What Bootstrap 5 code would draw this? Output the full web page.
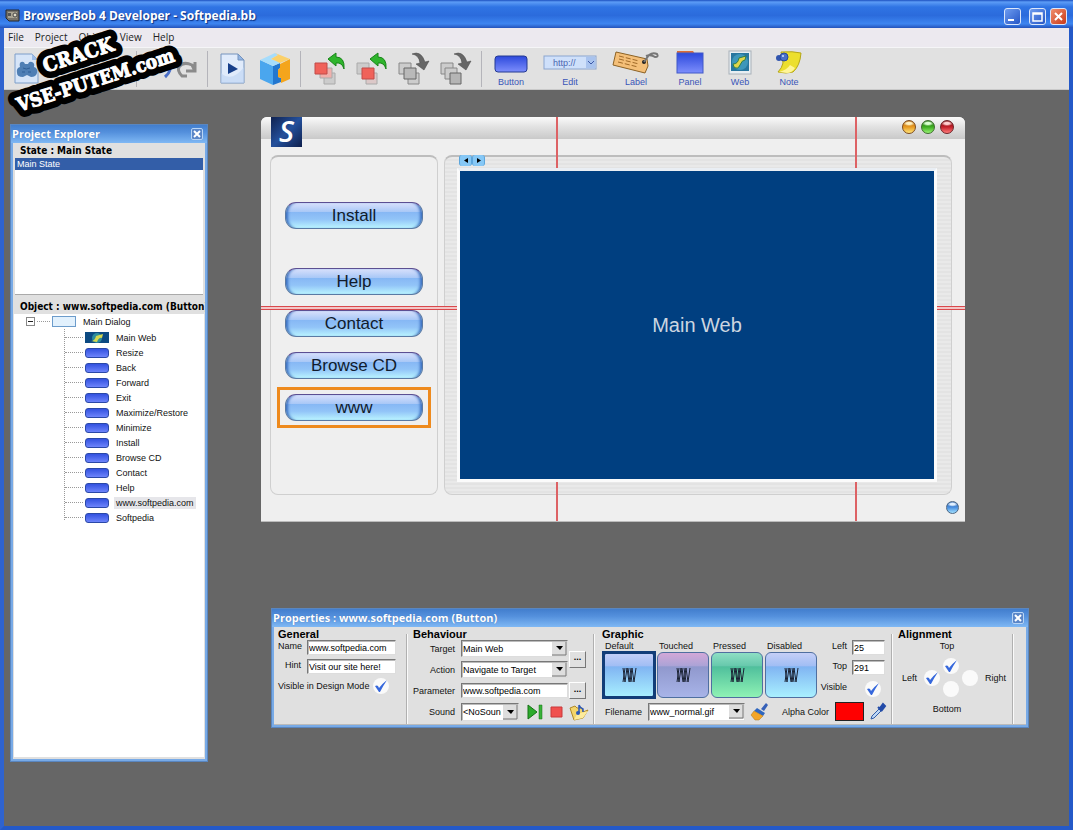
<!DOCTYPE html>
<html lang="en">
<head>
<meta charset="utf-8">
<meta name="viewport" content="width=device-width, initial-scale=1">
<title>BrowserBob 4 Developer - Softpedia.bb</title>
<link href="https://cdn.jsdelivr.net/npm/bootstrap@5.3.0/dist/css/bootstrap.min.css" rel="stylesheet">
<style>
:root{--ui:"Liberation Sans",Arial,sans-serif;--cap:"Open Sans","Noto Sans",sans-serif}
body{font-family:var(--ui);font-size:9px;line-height:12px;color:#111;background:#666}
button,input,select{font-family:inherit;font-size:inherit;line-height:inherit}
svg{display:block;overflow:visible}
.app{min-height:100vh;border:solid #2459c8;border-width:0 4px 4px;border-left-color:#2f63cf}
.titlebar{height:28px;margin:0 -4px;padding:4px 6px 0 5px;background:linear-gradient(#1c50c0 0,#5c9cf6 2px,#2f74e4 7px,#2b6bdc 55%,#3d85f0 85%,#2453bb);color:#fff}
.titlebar h1{font:bold 12px/16px var(--cap);text-shadow:1px 1px 1px #0b2f80;padding-left:2px}
.wbtn{width:17px;height:17px;padding:0;border:1px solid #dbe7fb;border-radius:3px;background:linear-gradient(135deg,#6e9cf0,#2556c6);color:#fff}
.wbtn.close-app{background:linear-gradient(135deg,#f0906e,#c8391a)}
.menubar{height:19px;background:#ece9ef;padding-left:4px}
.menubar a{font:10px/19px var(--cap);color:#222;text-decoration:none;margin-right:11px}
.toolbar{height:43px;background:#e1e1e1;border-top:1px solid #f5f5f7;border-bottom:1px solid #c9c9c9;padding-left:2px}
.tool{border:0;background:none;padding:0;flex:none;height:42px;color:#3a55b8;width:42px}
.tool svg{margin:auto}
.tool.slim{width:24px}
.w50{width:50px}.w68{width:68px}.w64{width:64px}.w44{width:44px}.w56{width:56px}.w14{width:14px}
.rule{width:1px;height:36px;background:#b4b4ba;flex:none}
.desk{background:#666}
.float{position:absolute;border:3px solid #78aae6;border-top:0;outline:1px solid #5a86bf;outline-offset:-1px;background:#e0e0e0}
.float>header{height:19px;margin:0 -3px;padding:0 5px 0 2px;background:linear-gradient(#3f7bcb,#5591dd 45%,#7fb8f4);color:#fff}
.float>header h2{font:bold 11px/19px var(--cap);text-shadow:0 0 1px #3c69ac}
.xbtn{width:12px;height:12px;padding:0;border:1px solid #b9d5f5;border-radius:2px;background:#5a86c8;color:#fff}
.explorer{left:6px;top:34px;width:198px;height:638px}
.band{height:15px;padding-left:7px;background:#e0e0e0;white-space:nowrap;overflow:hidden}
.band h3{font:bold 10px/15px "DejaVu Sans Condensed","DejaVu Sans",sans-serif;color:#000}
.states{height:137px;margin:0 2px;background:#fff;border-bottom:1px solid #aaa}
.states li{height:12px;padding-left:2px;background:#335ea8;color:#fff}
.tree{margin:0 1px 2px;background:#fff}
.tree ul{margin:0 0 0 50px;border-left:1px dotted #999;height:191px;padding-top:1px}
.root-row,.tree li{height:15px}
.root-row{padding-left:12px}
.minus{width:9px;height:9px;border:1px solid #888;padding:0;background:linear-gradient(#222,#222) center/5px 1px no-repeat #fff}
.dots{border-top:1px dotted #999;width:18px;height:1px;margin-right:2px}
.root-row .dots{width:13px;margin:0 2px}
.chip{width:24px;height:10px;border-radius:3px;border:1px solid #2a48a8;background:linear-gradient(#3352e0,#6d84fb)}
.chip.dlg{border-radius:0;background:#e2f1fd;border-color:#6c9ccb;height:11px}
.tree a{color:#111;text-decoration:none;padding:0 2px;line-height:12px;margin-left:5px}
.tree a.active{background:#e6e6ea}
.preview{position:absolute;left:257px;top:27px;width:704px;background:#efefef;border-radius:6px 6px 0 0;border-bottom:1px solid #bbb}
.preview-bar{height:22px;border-radius:6px 6px 0 0;background:linear-gradient(#fafafa,#e4e4e4 40%,#c9c9c9);padding:0 11px 2px 0;gap:5px}
.logo-s{position:absolute;left:10px;top:0;width:31px;height:30px;background:linear-gradient(135deg,#10224f,#24509c 50%,#0e1f4c);color:#fff;font:italic 600 29px/28px var(--cap);text-align:center}
.panes{padding:16px 13px 0 9px;gap:6px}
.foot{padding:6px 6px 7px}
.orb{width:14px;height:14px;border-radius:50%;border:1px solid #7d4a1c}
.orb.y{background:radial-gradient(ellipse 50% 22% at 50% 20%,#fff0c0 40%,transparent),linear-gradient(#b86a10,#e89a22 50%,#ffe478)}
.orb.g{background:radial-gradient(ellipse 50% 22% at 50% 20%,#d9ffd0 40%,transparent),linear-gradient(#236d12,#3fae22 50%,#98f474);border-color:#3c6b2c}
.orb.r{background:radial-gradient(ellipse 50% 22% at 50% 20%,#ffd0d0 40%,transparent),linear-gradient(#7a0e14,#c4202a 50%,#ff7c7c);border-color:#6d2226}
.orb.b{background:radial-gradient(ellipse 50% 22% at 50% 20%,#e2f0ff 40%,transparent),linear-gradient(#3468b0,#4b90e0 50%,#a0e0ff);border-color:#4c6684;width:13px;height:13px}
.pane{height:340px;border:1px solid #cfcfcf;border-top:2px solid #bdbdbd;border-radius:8px}
.side{width:168px;padding-top:45px;gap:15px}
.aqua{width:138px;height:27px;flex:none;padding:0;border:1px solid #5a7aa4;border-top-color:#5c4f92;border-radius:11px;font-size:17px;line-height:24px;color:#111b2c;background:linear-gradient(#d8e0fb 0,#a9c8f7 35%,#86b7f4 36%,#92c4f8 65%,#b9f4ff);box-shadow:inset 4px 0 3px -2px #3a6fc0,inset -4px 0 3px -2px #3a6fc0;position:relative}
.aqua.apart{margin-bottom:24px}
.aqua.chosen::after{content:"";position:absolute;inset:-8px -9px;border:3px solid #ee8a1d}
.stage{padding:11px 14px 12px 12px;background:repeating-linear-gradient(#e9e9e9 0 2px,#e3e3e3 2px 4px)}
.web{z-index:2;background:#003f80;border:3px solid #fbfbfb;border-top-color:#e9eef4;font-size:20px;line-height:24px;color:#ccd6e0}
.pager{position:absolute;left:198px;top:38px;z-index:3}
.pager button{width:13px;height:11px;padding:0;border:1px solid #5ba5dc;border-width:0 1px;border-radius:3px;background:#86c8f6}
.gv,.gh{position:absolute;z-index:1}
.gv{top:0;bottom:0;width:2px;background:#dd6265}
.gv.first{left:295px}.gv.last{left:594px}
.gh{left:0;right:0;top:189px;height:4px;background:linear-gradient(#d9484c 1px,#f2c6c6 1px 3px,#d9484c 3px)}
.props{left:267px;top:518px;width:758px}
.props fieldset{height:96px;border-right:1px solid #b0b0b0;box-shadow:1px 0 #fafafa;flex:none;min-width:0}
.props-body{border-bottom:1px solid #bbb;height:98px;padding-top:1px}
.props legend{float:none;margin:0;width:auto;font:bold 11px/12px var(--ui);color:#000}
.general{width:133px;padding-left:4px}
.behave{width:187px;padding-left:6px}
.graphic{width:298px;padding-left:8px}
.align{width:121px;padding-left:6px}
.field,.pick{border:1px solid #777;border-right-color:#ddd;border-bottom-color:#ddd;background:#fff;border-radius:0;color:#000;padding:0 1px;min-width:0;box-shadow:inset 1px 1px #bbb}
.field{height:15px}
.pick{appearance:none;height:17px;padding-right:17px;overflow:hidden;background:#fff url("data:image/svg+xml,%3Csvg xmlns='http://www.w3.org/2000/svg' width='15' height='15'%3E%3Cpath d='M0 0h15v15H0z' fill='%23dedede'/%3E%3Cpath d='M14 0v14H0' fill='none' stroke='%23777'/%3E%3Cpath d='M4 5h7l-3 4z'/%3E%3C/svg%3E") right center no-repeat}
.pick.tall{height:18px}
.pick.sound{width:58px}
.pick.file{width:97px}
.tick{appearance:none;width:16px;height:16px;margin:0;border:0;border-radius:50%;background:#fafafa center/16px no-repeat;flex:none}
.tick:checked{background-image:url("data:image/svg+xml,%3Csvg xmlns='http://www.w3.org/2000/svg' viewBox='0 0 16 16'%3E%3Cpath d='M2 8q2-1 3 0l1 2q4-5 8-8-4 6-7 12H6z' fill='%233567dc'/%3E%3C/svg%3E")}
.rows-general{display:grid;grid-template-columns:23px 89px;column-gap:6px;row-gap:4px;text-align:right}
.rows-behave{display:grid;grid-template-columns:42px 107px 16px;column-gap:6px;row-gap:4px;text-align:right;align-items:center}
.rows-place{display:grid;grid-template-columns:1fr 33px;gap:4px 5px;text-align:right;margin-left:auto;padding-right:6px}
.more{width:17px;height:17px;padding:0 0 4px;border:1px solid #fff;border-right-color:#777;border-bottom-color:#777;background:#e0e0e0;font-weight:bold;margin-left:-5px;line-height:10px}
.two-rows{grid-row:span 2}
.two-cols{grid-column:span 2}
.bare{border:0;background:none;padding:0;flex:none}
.thumb{display:block;position:relative;width:52px;height:46px;padding:0;border:1px solid #4f6fa0;border-radius:6px;background:linear-gradient(#c5cff7,#a0bdf4 30%,#80b4f2 31%,#a9f0ff)}
.thumb.t{background:linear-gradient(#d3a8d8,#aaa3d6 30%,#9098cd 31%,#a8b4e8)}
.thumb.p{background:linear-gradient(#8edfc4,#66c8ac 30%,#4fbf9c 31%,#8ff2b4)}
.thumb.on::after{content:"";position:absolute;inset:-2px;border:3px solid #123d78}
.states4{gap:2px;padding-left:1px}
.states4 span{display:block;padding-left:2px}
.file-row{gap:6px;padding:4px 0 0 3px;white-space:nowrap}
.swatch{width:29px;height:19px;border:1px solid #222;background:#f00;padding:0;flex:none}
.compass{gap:3px;padding:6px 0}
.compass>div{gap:7px}
.stampmark{position:absolute;left:0;top:0;z-index:9;pointer-events:none}
</style>
</head>
<body>
<div class="app d-flex flex-column position-relative">
  <div class="titlebar d-flex align-items-center">
    <svg width="16" height="16"><path d="M1 2h13v11H4L1 10z" fill="#77736a" stroke="#25282e"/><path d="M3 4h9v6H3z" fill="#a9a493"/><circle cx="10" cy="7" r="2" fill="#e1ddcb" stroke="#444"/><path d="M3 5h3v3H3z" fill="#555"/></svg>
    <h1 class="m-0 me-auto">BrowserBob 4 Developer - Softpedia.bb</h1>
    <div class="d-flex gap-1">
      <button class="wbtn" aria-label="Minimize"><svg width="15" height="15"><path d="M3 11h6" stroke="#fff" stroke-width="2"/></svg></button>
      <button class="wbtn ms-1" aria-label="Maximize"><svg width="15" height="15"><path d="M3 4h9v8H3zM3 5h9" fill="none" stroke="#fff" stroke-width="1.500"/></svg></button>
      <button class="wbtn close-app" aria-label="Close"><svg width="15" height="15"><path d="M4 4l7 7M11 4l-7 7" stroke="#fff" stroke-width="2"/></svg></button>
    </div>
  </div>
  <nav class="menubar d-flex ps-1"><a href="#">File</a><a href="#">Project</a><a href="#">Object</a><a href="#">View</a><a href="#">Help</a></nav>

  <div class="toolbar d-flex align-items-center">
    <button class="tool" aria-label="New"><svg width="26" height="32"><path d="M1 1h17l6 6v23H1z" fill="#d6e5f8" stroke="#7d9ec9"/><path d="M18 1v6h6" fill="#9dbce6"/><path d="M7 9q3-1 4 2h3q1-3 4-2 3 1 2 5 4 1 3 6-1 4-6 4l-4-2-4 2q-6 0-6-4-1-5 3-6-1-4 1-5z" fill="#4f7fb4"/><path d="M9 15q3 2 7 0M8 19h3M14 19h3" stroke="#2f5f96" fill="none"/></svg></button>
    <div class="w44 flex-shrink-0"></div><div class="w44 flex-shrink-0"></div>
    <div class="rule"></div><div class="w14 flex-shrink-0"></div>
    <button class="tool slim" aria-label="Undo"><svg width="20" height="20"><path d="M2 2v7h7M3 8Q10 2 15 6q5 5-3 12" fill="none" stroke="#4a6fc8" stroke-width="3"/></svg></button>
    <button class="tool slim" aria-label="Redo"><svg width="22" height="22"><path d="M11 18H6Q1 13 3 9q4-6 13-2l2 4M19 4v9h-9" fill="none" stroke="#8b8b8b" stroke-width="3"/></svg></button>
    <div class="ps-2"></div><div class="rule"></div><div class="ps-1"></div>
    <button class="tool" aria-label="Run"><svg width="26" height="32"><path d="M1 1h17l6 6v23H1z" fill="#e0ebfb" stroke="#7593bd"/><path d="M18 1v6h6z" fill="#92b5e4" stroke="#7593bd"/><path d="M1 30h23V14Q12 30 1 20z" fill="#bdd4f4" opacity=".6"/><path d="M8 10v11l10-5z" fill="#173f8a"/></svg></button>
    <button class="tool" aria-label="Build"><svg width="32" height="34"><path d="M1 8L14 14v19L1 27z" fill="#4aa6ee"/><path d="M14 14l7-3v5l-2 2v7l3 1v4l-8 3z" fill="#2377cf"/><path d="M1 8L16 1l3 2-7 4 5 2 5-1-1 3-7 3z" fill="#a6dcfb"/><path d="M21 12l10-5v20l-9 4v-5l-3-1v-7l2-2z" fill="#f4a51c"/><path d="M16 1l15 6-10 4-4-2-5-2 7-4z" fill="#fbd069"/></svg></button>
    <div class="ps-1"></div><div class="rule"></div><div class="ps-2"></div>
    <button class="tool" aria-label="Bring to front"><svg width="32" height="34"><g stroke="#aaa"><path d="M10 21h11v11H10z" fill="#ccc"/><path d="M6 16h12v10H6z" fill="#f0b0ac"/><path d="M1 11h12v11H1z" fill="#f0625a" stroke="#c04a48"/></g><path d="M14 7l8-6v4q9 0 8 12-2-7-8-6v3z" fill="#2fb52c" stroke="#188418"/></svg></button>
    <button class="tool" aria-label="Bring forward"><svg width="32" height="34"><g stroke="#aaa"><path d="M10 21h11v11H10z" fill="#dcc8c8"/><path d="M1 11h12v11H1z" fill="#ccc"/><path d="M6 16h12v11H6z" fill="#f0625a" stroke="#c04a48"/></g><path d="M14 7l8-6v4q9 0 8 12-2-7-8-6v3z" fill="#2fb52c" stroke="#188418"/></svg></button>
    <button class="tool" aria-label="Send backward"><svg width="32" height="34"><g stroke="#888" fill="#ccc"><path d="M1 11h12v11H1z"/><path d="M10 21h11v11H10z"/><path d="M6 16h12v11H6z" fill="#b9b9b9" stroke="#666"/></g><path d="M14 2Q23-2 27 10l4-1-5 9-8-6 4-1q-1-8-8-9z" fill="#666" stroke="#444" stroke-width=".5"/></svg></button>
    <button class="tool" aria-label="Send to back"><svg width="32" height="34"><g stroke="#888" fill="#ccc"><path d="M1 11h12v11H1z"/><path d="M5 16h12v11H5z"/><path d="M10 21h11v11H10z" fill="#b5b5b5" stroke="#666"/></g><path d="M14 2Q23-2 27 10l4-1-5 9-8-6 4-1q-1-8-8-9z" fill="#666" stroke="#444" stroke-width=".5"/></svg></button>
    <div class="ps-1"></div><div class="rule"></div><div class="ps-1"></div>
    <button class="tool w50"><svg width="34" height="26"><defs><linearGradient id="blu" x2="0" y2="1"><stop stop-color="#2c49dc"/><stop offset="1" stop-color="#7d8efc"/></linearGradient></defs><rect x="1" y="6" width="32" height="16" rx="3" fill="url(#blu)" stroke="#253a92"/></svg>Button</button>
    <button class="tool w68"><svg width="54" height="26"><rect x="1" y="6" width="52" height="13" fill="#cfe0fa" stroke="#8ca6cf"/><path d="M43 7h9v11h-9z" fill="#a9c3ee"/><path d="M45 11l3 3 3-3" fill="none" stroke="#3c59a8"/><text x="10" y="16" font-size="9" fill="#4b66b0">http://</text></svg>Edit</button>
    <button class="tool w64"><svg width="48" height="26"><path d="M4 2l31 7 1 7-3 7L1 15z" fill="#f4bf78" stroke="#8c6224"/><path d="M7 6l20 5M7 9l20 5M6 12l20 5" stroke="#a06a28" stroke-dasharray="5 2"/><circle cx="32" cy="12" r="2" fill="#222"/><path d="M32 12l5-7q4-3 8-1 2 3-2 3-4-3-9-1" fill="none" stroke="#777" stroke-width="2"/></svg>Label</button>
    <button class="tool w44"><svg width="28" height="26"><path d="M1 4V1h16l2 3z" fill="#dd6d35"/><rect x="1" y="3" width="26" height="20" fill="url(#blu)" stroke="#4058c8"/></svg>Panel</button>
    <button class="tool w56"><svg width="24" height="26"><rect x="1" y="1" width="22" height="23" fill="#e8eef2" stroke="#a9b2ba"/><rect x="3" y="3" width="18" height="18" fill="#27769f"/><circle cx="12" cy="12" r="8" fill="#3d97bb"/><path d="M5 14q5 0 6-6l7-2-1 4q-3 0-5 5-2 5-6 2z" fill="#e0d54a" stroke="#337f45"/></svg>Web</button>
    <button class="tool"><svg width="28" height="26"><path d="M6 2q12-1 20 1-1 13-8 19-7 2-15 0 4-4 5-9z" fill="#ecdf2e" stroke="#b5a618"/><path d="M4 22q8-2 11-7l5 3q-3 5-8 5z" fill="#fff598"/><circle cx="4" cy="8" r="3" fill="#3155ae"/><circle cx="9" cy="7" r="4" fill="#4a70c8" stroke="#284a9c"/><circle cx="8" cy="6" r="1" fill="#cfe0ff"/></svg>Note</button>
  </div>

  <main class="desk flex-grow-1 position-relative">
    <section class="float explorer d-flex flex-column">
      <header class="d-flex align-items-center justify-content-between"><h2 class="m-0">Project Explorer</h2><button class="xbtn" aria-label="Close explorer"><svg width="10" height="10"><path d="M2 2l6 6M8 2l-6 6" stroke="#fff" stroke-width="2"/></svg></button></header>
      <div class="band"><h3 class="m-0">State : Main State</h3></div>
      <ul class="states list-unstyled"><li>Main State</li></ul>
      <div class="pt-1"></div>
      <div class="band"><h3 class="m-0">Object : www.softpedia.com (Button)</h3></div>
      <div class="tree flex-grow-1">
        <div class="root-row d-flex align-items-center"><button class="minus" aria-label="Collapse"></button><i class="dots"></i><i class="chip dlg"></i><a href="#">Main Dialog</a></div>
        <ul class="list-unstyled" id="objects">
          <li class="d-flex align-items-center"><i class="dots"></i><svg width="24" height="12"><path d="M0 0h24v11H0z" fill="#0c4a82"/><circle cx="12" cy="6" r="5" fill="#2f8d9c"/><path d="M6 9q4 0 5-5l7-2-1 4q-3-1-5 4z" fill="#d6d94e"/></svg><a href="#">Main Web</a></li>
        </ul>
      </div>
    </section>

    <section class="preview">
      <div class="preview-bar d-flex align-items-center justify-content-end"><i class="orb y"></i><i class="orb g"></i><i class="orb r"></i></div>
      <div class="logo-s">S</div>
      <i class="gv first"></i><i class="gv last"></i><i class="gh"></i>
      <div class="panes d-flex">
        <div class="pane side d-flex flex-column align-items-center">
          <button class="aqua apart">Install</button><button class="aqua">Help</button><button class="aqua">Contact</button><button class="aqua">Browse CD</button><button class="aqua chosen">www</button>
        </div>
        <div class="pane stage flex-grow-1 d-flex"><div class="web position-relative flex-grow-1 d-flex align-items-center justify-content-center">Main Web</div></div>
      </div>
      <div class="pager d-flex"><button aria-label="Previous"><svg width="11" height="11"><path d="M8 3v5L4 5.500z"/></svg></button><button aria-label="Next"><svg width="11" height="11"><path d="M4 3v5l4-2.500z"/></svg></button></div>
      <div class="foot d-flex justify-content-end"><i class="orb b"></i></div>
    </section>

    <section class="float props">
      <header class="d-flex align-items-center justify-content-between"><h2 class="m-0">Properties : www.softpedia.com (Button)</h2><button class="xbtn" aria-label="Close properties"><svg width="10" height="10"><path d="M2 2l6 6M8 2l-6 6" stroke="#fff" stroke-width="2"/></svg></button></header>
      <div class="props-body d-flex">
        <fieldset class="general"><legend>General</legend>
          <div class="rows-general"><label for="nm">Name</label><input id="nm" class="field" value="www.softpedia.com"><label for="hn">Hint</label><input id="hn" class="field" value="Visit our site here!"></div>
          <div class="d-flex align-items-center pt-1 gap-1"><label for="vd">Visible in Design Mode</label><input id="vd" type="checkbox" class="tick" checked></div>
        </fieldset>
        <fieldset class="behave"><legend>Behaviour</legend>
          <div class="rows-behave">
            <label for="tg">Target</label><select id="tg" class="pick"><option>Main Web</option></select><button class="more two-rows" aria-label="Browse target">...</button>
            <label for="ac">Action</label><select id="ac" class="pick"><option>Navigate to Target</option></select>
            <label for="pa">Parameter</label><input id="pa" class="field" value="www.softpedia.com"><button class="more" aria-label="Browse parameter">...</button>
            <label for="so">Sound</label>
            <div class="two-cols d-flex align-items-center gap-2"><select id="so" class="pick tall sound"><option>&lt;NoSound&gt;</option></select>
              <button class="bare" aria-label="Play"><svg width="15" height="16"><path d="M1 1l9 7-9 7z" fill="#2cab2c" stroke="#177217"/><path d="M12 1h3v14h-3z" fill="#39b139" stroke="#177217" stroke-width=".5"/></svg></button>
              <button class="bare" aria-label="Stop"><svg width="12" height="12"><path d="M1 1h11v10H1z" fill="#f0504e" stroke="#c9383a"/></svg></button>
              <button class="bare" aria-label="Open sound"><svg width="18" height="17"><path d="M0 4l5-2 2 2h5l1 4 5-2-5 8-9 2z" fill="#f3d56b" stroke="#b08a28"/><path d="M4 16l3-6 11-3-5 7z" fill="#fdeb9c"/><path d="M9 1v8M9 1q1 3 4 4v3" stroke="#2c58b8" stroke-width="1.500" fill="none"/><circle cx="8" cy="9" r="2" fill="#2c58b8"/></svg></button></div>
          </div>
        </fieldset>
        <fieldset class="graphic"><legend>Graphic</legend>
          <div class="d-flex">
            <div class="d-flex states4" id="thumbs"></div>
            <div class="rows-place">
              <label for="lf">Left</label><input id="lf" class="field w-100" value="25"><label for="tp">Top</label><input id="tp" class="field w-100" value="291"><label for="vs">Visible</label><div class="d-flex justify-content-center ps-2"><input id="vs" type="checkbox" class="tick" checked></div>
            </div>
          </div>
          <div class="file-row d-flex align-items-center">
            <label for="fn">Filename</label><select id="fn" class="pick tall file"><option>www_normal.gif</option></select>
            <button class="bare me-2" aria-label="Edit graphic"><svg width="17" height="17"><path d="M10 6l5-6 2 2-4 6z" fill="#3560b8"/><path d="M6 5l8 5-2 3-9-5z" fill="#2f66bf"/><path d="M3 8l9 5-4 4H4l-4-5z" fill="#f3a527" stroke="#a8761c" stroke-width=".5"/></svg></button>
            <label for="al">Alpha Color</label><button id="al" class="swatch" aria-label="Alpha color"></button>
            <button class="bare" aria-label="Pick color"><svg width="16" height="17"><path d="M1 16l1-3 7-7 2 2-7 7z" fill="#bdd7f6" stroke="#315ca8"/><path d="M8 4l4 4M10 5l3-4 2 2-3 4z" fill="#234ba8" stroke="#234ba8" stroke-width="2"/></svg></button>
          </div>
        </fieldset>
        <fieldset class="align"><legend>Alignment</legend>
          <label for="at" class="d-block text-center pe-3">Top</label>
          <div class="compass d-flex align-items-center">
            <label for="l2" class="px-1">Left</label><input id="l2" type="checkbox" class="tick" checked>
            <div class="d-flex flex-column"><input id="at" type="checkbox" class="tick" checked><input id="ab" type="checkbox" class="tick"></div>
            <input id="r2" type="checkbox" class="tick"><label for="r2" class="ps-1">Right</label>
          </div>
          <label for="ab" class="d-block text-center pe-3">Bottom</label>
        </fieldset>
      </div>
    </section>
  </main>

  <svg class="stampmark" width="190" height="120" font-family="DejaVu Serif Condensed, DejaVu Serif, serif" font-weight="bold" stroke-linejoin="round">
    <g transform="rotate(-18)" stroke="#000" stroke-width="14" fill="#000"><text x="17" y="82" font-size="20">CRACK</text><text x="-20" y="111" font-size="19">VSE-PUTEM.com</text></g>
    <g transform="rotate(-18)" stroke="#fff" stroke-width="1" fill="#fff"><text x="17" y="82" font-size="20">CRACK</text><text x="-20" y="111" font-size="19">VSE-PUTEM.com</text></g>
  </svg>
</div>
<script>
const names=['Resize','Back','Forward','Exit','Maximize/Restore','Minimize','Install','Browse CD','Contact','Help','www.softpedia.com','Softpedia'];
document.getElementById('objects').insertAdjacentHTML('beforeend',names.map(n=>`<li class="d-flex align-items-center"><i class="dots"></i><i class="chip"></i><a href="#" class="${n.startsWith('www')?'active':''}">${n}</a></li>`).join(''));
document.getElementById('thumbs').innerHTML=[['Default','on'],['Touched','t'],['Pressed','p'],['Disabled','']].map(([n,c])=>`<div><span>${n}</span><button class="thumb ${c}" aria-label="${n} graphic"><svg width="50" height="44"><path d="M19 15l2 14 2-14 2 14M24 15l2 14 2-14 2 14 2-14M19 29l2-14M28 29l-2-14" fill="none" stroke="#1b2335"/></svg></button></div>`).join('');
</script>
<script src="https://cdn.jsdelivr.net/npm/bootstrap@5.3.0/dist/js/bootstrap.bundle.min.js"></script>
</body>
</html>
